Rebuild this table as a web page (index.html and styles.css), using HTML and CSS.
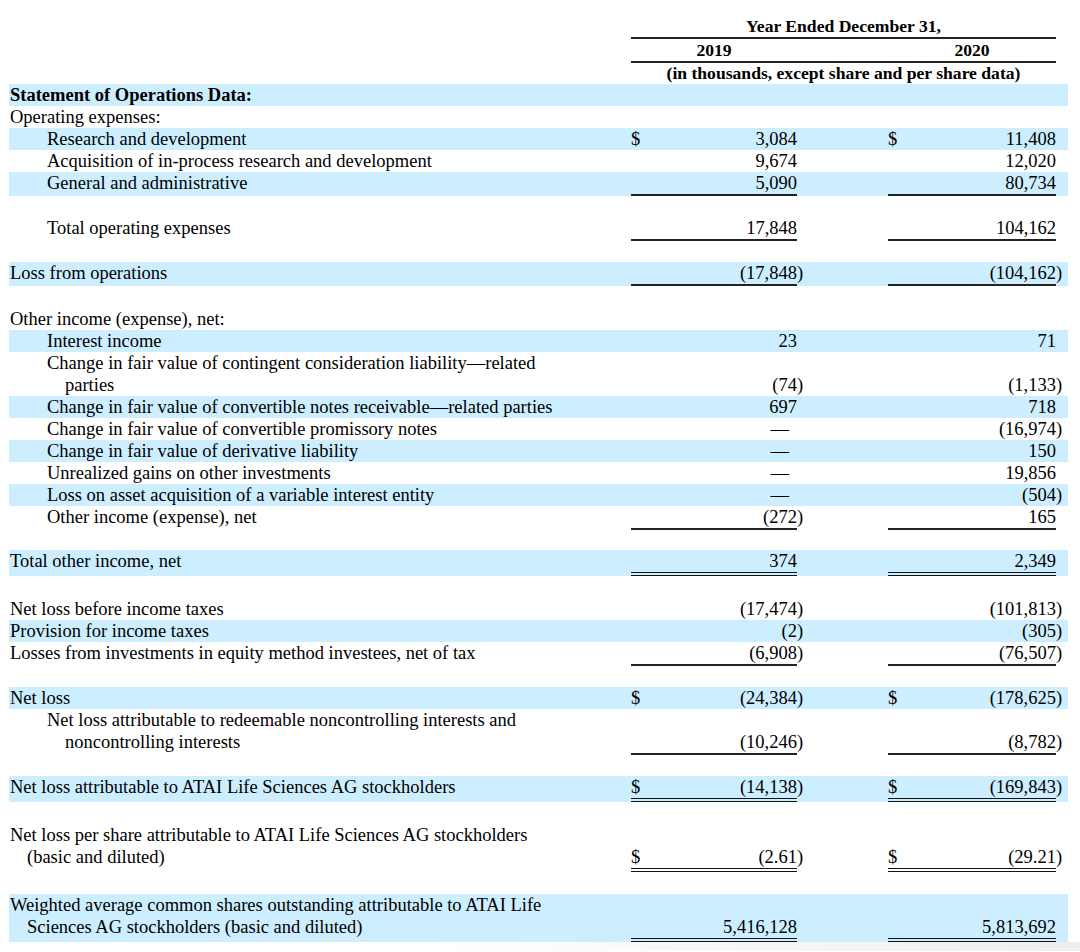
FILE: index.html
```html
<!DOCTYPE html>
<html lang="en">
<head>
<meta charset="utf-8">
<title>Statement of Operations Data</title>
<link rel="stylesheet" href="styles.css">
</head>
<body>
<table class="ops">
  <colgroup>
    <col class="c-label"><col class="c-dol"><col class="c-num1"><col class="c-par1"><col class="c-sp"><col class="c-dol"><col class="c-num2"><col class="c-par2">
  </colgroup>
  <thead>
    <tr>
      <td></td><th colspan="6" class="u">Year Ended December 31,</th><td></td>
    </tr>
    <tr>
      <td></td><th colspan="2" class="u">2019</th><th colspan="2" class="u"></th><th colspan="2" class="u">2020</th><td></td>
    </tr>
    <tr class="h-units">
      <td></td><th colspan="6">(in thousands, except share and per share data)</th><td></td>
    </tr>
  </thead>
  <tbody>
    <tr class="sh"><td class="lbl b">Statement of Operations Data:</td><td></td><td></td><td></td><td></td><td></td><td></td><td></td></tr>
    <tr><td class="lbl">Operating expenses:</td><td></td><td></td><td></td><td></td><td></td><td></td><td></td></tr>
    <tr class="sh"><td class="lbl sub">Research and development</td><td class="d">$</td><td class="n">3,084</td><td></td><td></td><td class="d">$</td><td class="n">11,408</td><td></td></tr>
    <tr><td class="lbl sub">Acquisition of in-process research and development</td><td></td><td class="n">9,674</td><td></td><td></td><td></td><td class="n">12,020</td><td></td></tr>
    <tr class="sh"><td class="lbl sub">General and administrative</td><td class="d u"></td><td class="n u">5,090</td><td></td><td></td><td class="d u"></td><td class="n u">80,734</td><td></td></tr>
    <tr class="gap g21"><td colspan="8"></td></tr>
    <tr><td class="lbl sub">Total operating expenses</td><td class="d u"></td><td class="n u">17,848</td><td></td><td></td><td class="d u"></td><td class="n u">104,162</td><td></td></tr>
    <tr class="gap g21"><td colspan="8"></td></tr>
    <tr class="sh"><td class="lbl">Loss from operations</td><td class="d u"></td><td class="n u">(17,848</td><td class="p pu">)</td><td></td><td class="d u"></td><td class="n u">(104,162</td><td class="p pu">)</td></tr>
    <tr class="gap g22"><td colspan="8"></td></tr>
    <tr><td class="lbl">Other income (expense), net:</td><td></td><td></td><td></td><td></td><td></td><td></td><td></td></tr>
    <tr class="sh"><td class="lbl sub">Interest income</td><td></td><td class="n">23</td><td></td><td></td><td></td><td class="n">71</td><td></td></tr>
    <tr><td class="lbl sub hang">Change in fair value of contingent consideration liability—related<br>parties</td><td></td><td class="n">(74</td><td class="p">)</td><td></td><td></td><td class="n">(1,133</td><td class="p">)</td></tr>
    <tr class="sh"><td class="lbl sub">Change in fair value of convertible notes receivable—related parties</td><td></td><td class="n">697</td><td></td><td></td><td></td><td class="n">718</td><td></td></tr>
    <tr><td class="lbl sub">Change in fair value of convertible promissory notes</td><td></td><td class="n dash">—</td><td></td><td></td><td></td><td class="n">(16,974</td><td class="p">)</td></tr>
    <tr class="sh"><td class="lbl sub">Change in fair value of derivative liability</td><td></td><td class="n dash">—</td><td></td><td></td><td></td><td class="n">150</td><td></td></tr>
    <tr><td class="lbl sub">Unrealized gains on other investments</td><td></td><td class="n dash">—</td><td></td><td></td><td></td><td class="n">19,856</td><td></td></tr>
    <tr class="sh"><td class="lbl sub">Loss on asset acquisition of a variable interest entity</td><td></td><td class="n dash">—</td><td></td><td></td><td></td><td class="n">(504</td><td class="p">)</td></tr>
    <tr><td class="lbl sub">Other income (expense), net</td><td class="d u"></td><td class="n u">(272</td><td class="p pu">)</td><td></td><td class="d u"></td><td class="n u">165</td><td></td></tr>
    <tr class="gap g20"><td colspan="8"></td></tr>
    <tr class="sh"><td class="lbl">Total other income, net</td><td class="d uu"></td><td class="n uu">374</td><td></td><td></td><td class="d uu"></td><td class="n uu">2,349</td><td></td></tr>
    <tr class="gap g22"><td colspan="8"></td></tr>
    <tr><td class="lbl">Net loss before income taxes</td><td></td><td class="n">(17,474</td><td class="p">)</td><td></td><td></td><td class="n">(101,813</td><td class="p">)</td></tr>
    <tr class="sh"><td class="lbl">Provision for income taxes</td><td></td><td class="n">(2</td><td class="p">)</td><td></td><td></td><td class="n">(305</td><td class="p">)</td></tr>
    <tr><td class="lbl">Losses from investments in equity method investees, net of tax</td><td class="d u"></td><td class="n u">(6,908</td><td class="p pu">)</td><td></td><td class="d u"></td><td class="n u">(76,507</td><td class="p pu">)</td></tr>
    <tr class="gap g21"><td colspan="8"></td></tr>
    <tr class="sh"><td class="lbl">Net loss</td><td class="d">$</td><td class="n">(24,384</td><td class="p">)</td><td></td><td class="d">$</td><td class="n">(178,625</td><td class="p">)</td></tr>
    <tr><td class="lbl sub hang pb2">Net loss attributable to redeemable noncontrolling interests and<br>noncontrolling interests</td><td class="d u"></td><td class="n u">(10,246</td><td class="p pu">)</td><td></td><td class="d u"></td><td class="n u">(8,782</td><td class="p pu">)</td></tr>
    <tr class="gap g21"><td colspan="8"></td></tr>
    <tr class="sh"><td class="lbl">Net loss attributable to ATAI Life Sciences AG stockholders</td><td class="d uu">$</td><td class="n uu">(14,138</td><td class="p puu">)</td><td></td><td class="d uu">$</td><td class="n uu">(169,843</td><td class="p puu">)</td></tr>
    <tr class="gap g22"><td colspan="8"></td></tr>
    <tr><td class="lbl hang-top pb4">Net loss per share attributable to ATAI Life Sciences AG stockholders<br>(basic and diluted)</td><td class="d uu">$</td><td class="n uu">(2.61</td><td class="p puu">)</td><td></td><td class="d uu">$</td><td class="n uu">(29.21</td><td class="p puu">)</td></tr>
    <tr class="gap g22"><td colspan="8"></td></tr>
    <tr class="sh"><td class="lbl hang-top pb4">Weighted average common shares outstanding attributable to ATAI Life<br>Sciences AG stockholders (basic and diluted)</td><td class="d uu"></td><td class="n uu">5,416,128</td><td></td><td></td><td class="d uu"></td><td class="n uu">5,813,692</td><td></td></tr>
  </tbody>
</table>
<div class="foot"></div>
</body>
</html>
```
FILE: styles.css
```css
html, body {
  margin: 0;
  padding: 0;
  background: #ffffff;
}

body {
  font-family: "Liberation Serif", "Times New Roman", serif;
  font-size: 18.5px;
  color: #000000;
}

.ops {
  border-collapse: separate;
  border-spacing: 0;
  table-layout: fixed;
  width: 1059px;
  margin: 15px 0 0 9px;
}

.ops td,
.ops th {
  padding: 0;
  line-height: 22px;
  vertical-align: bottom;
  white-space: nowrap;
}

.ops th {
  font-size: 17.6px;
  font-weight: bold;
  text-align: center;
}

.ops .h-units th,
.ops .h-units td {
  line-height: 21px;
}

.c-label { width: 622px; }
.c-dol { width: 20px; }
.c-num1 { width: 146px; }
.c-par1 { width: 14px; }
.c-sp { width: 77px; }
.c-num2 { width: 148px; }
.c-par2 { width: 12px; }

.sh { background: #cceeff; }

.ops td.lbl {
  text-align: left;
  vertical-align: top;
  padding-left: 1px;
}

.ops td.lbl.b { font-weight: bold; }

.ops td.lbl.sub { padding-left: 38px; }

.ops td.lbl.sub.hang {
  padding-left: 56px;
  text-indent: -18px;
}

.ops td.lbl.hang-top {
  padding-left: 18px;
  text-indent: -17px;
}

.ops td.lbl.pb2 { padding-bottom: 2px; }
.ops td.lbl.pb4 { padding-bottom: 4px; }

.d { text-align: left; }

.n { text-align: right; }

.ops td.n.dash { padding-right: 8px; }

.p { text-align: left; }

.ops td.p.pu { padding-bottom: 2px; }
.ops td.p.puu { padding-bottom: 4px; }

.u { border-bottom: 2px solid #222222; }

.uu { border-bottom: 4px double #111111; }

.gap td { padding: 0; line-height: 0; }
.g20 td { height: 20px; }
.g21 td { height: 21px; }
.g22 td { height: 22px; }

.foot {
  height: 9px;
  background: linear-gradient(90deg, #ffffff 0%, #ffffff 40%, #eeeeee 100%);
}
```
